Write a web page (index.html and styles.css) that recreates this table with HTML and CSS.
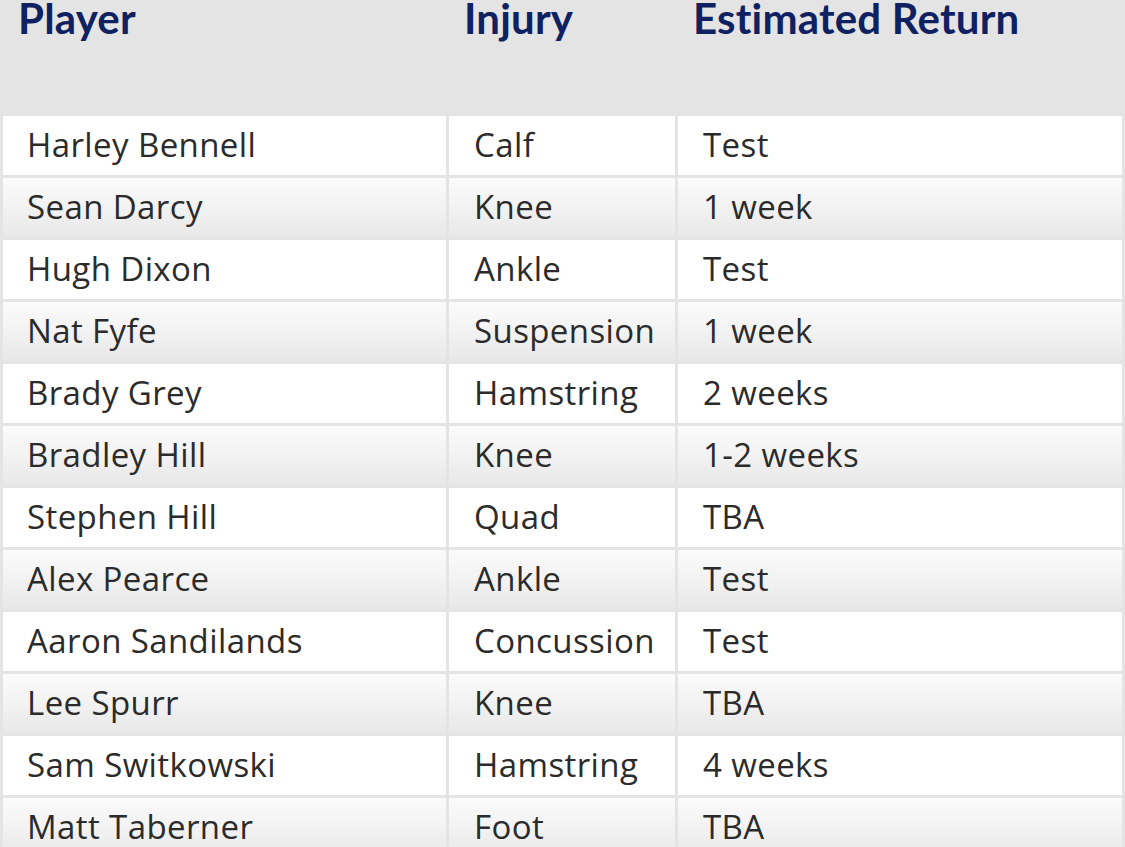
FILE: index.html
```html
<!DOCTYPE html>
<html>
<head>
<meta charset="utf-8">
<link rel="stylesheet" href="styles.css">
</head>
<body>
<table class="injuries">
  <thead>
    <tr>
      <th class="col-player"><span class="head">Player</span></th>
      <th class="col-injury"><span class="head">Injury</span></th>
      <th class="col-return"><span class="head">Estimated Return</span></th>
    </tr>
  </thead>
  <tbody>
    <tr><td>Harley Bennell</td><td>Calf</td><td>Test</td></tr>
    <tr class="alt"><td>Sean Darcy</td><td>Knee</td><td>1 week</td></tr>
    <tr><td>Hugh Dixon</td><td>Ankle</td><td>Test</td></tr>
    <tr class="alt"><td>Nat Fyfe</td><td>Suspension</td><td>1 week</td></tr>
    <tr><td>Brady Grey</td><td>Hamstring</td><td>2 weeks</td></tr>
    <tr class="alt"><td>Bradley Hill</td><td>Knee</td><td>1-2 weeks</td></tr>
    <tr><td>Stephen Hill</td><td>Quad</td><td>TBA</td></tr>
    <tr class="alt"><td>Alex Pearce</td><td>Ankle</td><td>Test</td></tr>
    <tr><td>Aaron Sandilands</td><td>Concussion</td><td>Test</td></tr>
    <tr class="alt"><td>Lee Spurr</td><td>Knee</td><td>TBA</td></tr>
    <tr><td>Sam Switkowski</td><td>Hamstring</td><td>4 weeks</td></tr>
    <tr class="alt"><td>Matt Taberner</td><td>Foot</td><td>TBA</td></tr>
  </tbody>
</table>
</body>
</html>
```
FILE: styles.css
```css
html, body {
  margin: 0;
  padding: 0;
  background: #e4e4e4;
  overflow: hidden;
}
.injuries {
  width: 1125px;
  border-collapse: separate;
  border-spacing: 3px;
  margin-top: -3px;
  table-layout: fixed;
}
th, td {
  box-sizing: border-box;
}
.col-player { width: 443px; }
.col-injury { width: 226px; }
th {
  height: 113px;
  padding: 0 0 0 15px;
  text-align: left;
  vertical-align: top;
  background: #e4e4e4;
  font-family: "Lato", sans-serif;
  font-weight: 700;
  font-size: 42px;
  letter-spacing: 0.2px;
  color: #0f2160;
  line-height: 1;
}
.head {
  display: block;
  margin-top: -3px;
}
td {
  height: 59px;
  padding: 0 0 3px 24px;
  background: #ffffff;
  font-family: "Open Sans", sans-serif;
  font-size: 33px;
  letter-spacing: 0.4px;
  color: #2b2b2b;
  line-height: 1;
  vertical-align: middle;
  white-space: nowrap;
}
td + td {
  padding-left: 25px;
}
tr.alt td {
  background: linear-gradient(to bottom, #fbfbfc 0%, #f3f3f4 45%, #e8e8e8 100%);
}
```
